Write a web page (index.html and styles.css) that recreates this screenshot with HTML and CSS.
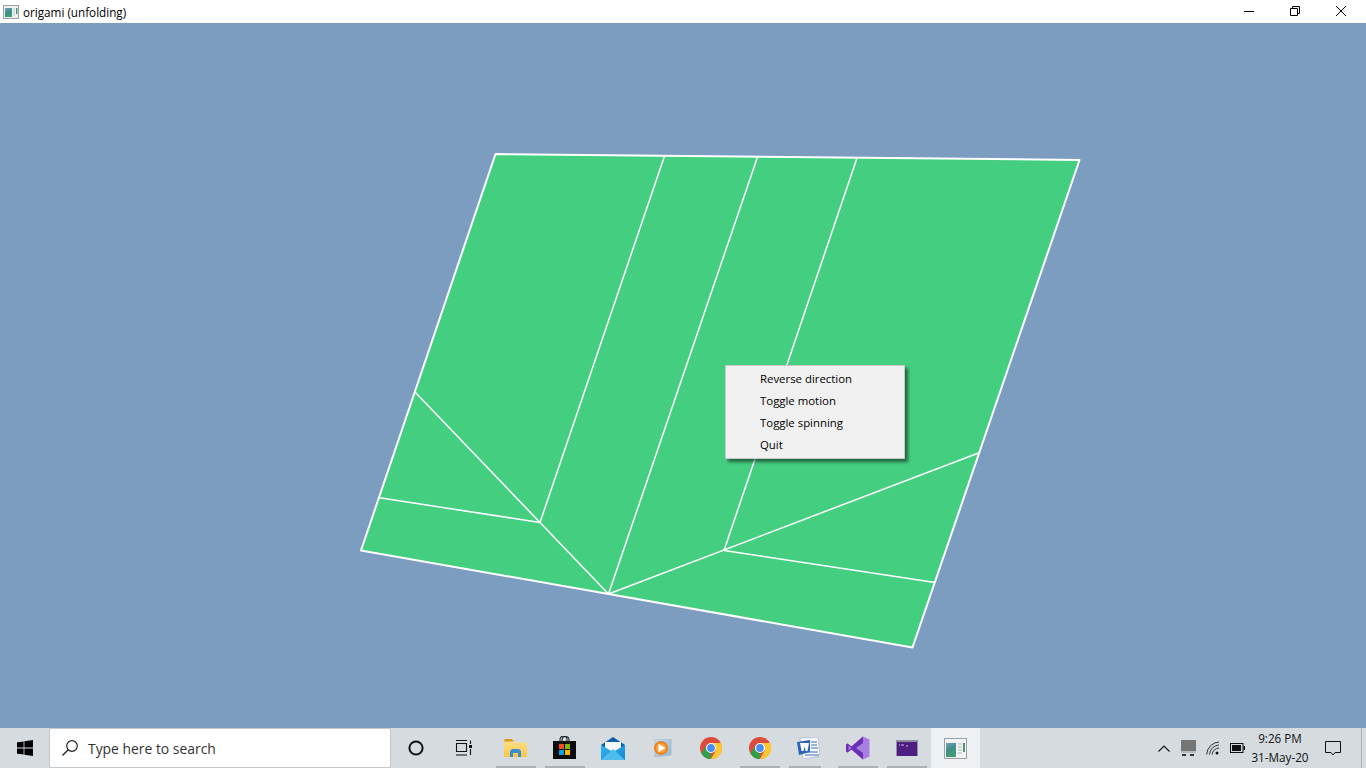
FILE: index.html
```html
<!DOCTYPE html>
<html lang="en">
<head>
<meta charset="utf-8">
<title>origami (unfolding)</title>
<link rel="stylesheet" href="styles.css">
</head>
<body>
<div class="screen">
  <svg class="defs" width="0" height="0" aria-hidden="true">
    <defs>
      <linearGradient id="panel" x1="0" y1="0" x2="0.4" y2="1"><stop offset="0" stop-color="#6f9fc4"/><stop offset="0.55" stop-color="#3f8f86"/><stop offset="1" stop-color="#3fa070"/></linearGradient>
      <linearGradient id="folder" x1="0" y1="0" x2="0" y2="1"><stop offset="0" stop-color="#fde08a"/><stop offset="1" stop-color="#f7c548"/></linearGradient>
      <linearGradient id="mail" x1="0" y1="0" x2="1" y2="1"><stop offset="0" stop-color="#38b4ec"/><stop offset="1" stop-color="#1186d4"/></linearGradient>
      <linearGradient id="glass" x1="0" y1="0" x2="1" y2="1"><stop offset="0" stop-color="#c8deef"/><stop offset="1" stop-color="#8fb6d2"/></linearGradient>
    </defs>
  </svg>
  <header class="titlebar">
    <svg class="app-icon" width="16" height="16" viewBox="0 0 16 16"><rect x="0.5" y="1.500" width="15" height="13" fill="#eef1f0" stroke="#9aa3a3"/><rect x="2" y="4" width="7" height="9" fill="url(#panel)"/><path d="M10 5H12M10 7H12M10 9H12M10 11H12" stroke="#c3cccc"/><rect x="13" y="4" width="1.500" height="6" fill="#4a9478"/></svg>
    <span class="title">origami (unfolding)</span>
    <div class="win-controls">
      <div class="win-btn"><svg width="12" height="12" viewBox="0 0 12 12"><path d="M1 6.500H11" stroke="#000" fill="none"/></svg></div>
      <div class="win-btn"><svg width="12" height="12" viewBox="0 0 12 12"><path d="M1.500 3.500H8.500V10.500H1.500ZM3.500 3.500V1.500H10.500V8.500H8.500" stroke="#000" fill="none"/></svg></div>
      <div class="win-btn"><svg width="12" height="12" viewBox="0 0 12 12"><path d="M1 1L11 11M11 1L1 11" stroke="#000" stroke-width="1" fill="none"/></svg></div>
    </div>
  </header>

  <main class="canvas">
    <svg class="scene" viewBox="0 23 1366 705" width="1366" height="705">
      <polygon class="sheet" points="495.500,154 1079.500,160 912.500,647.500 361,550.500"/>
      <g class="folds">
        <line x1="664.500" y1="156" x2="540" y2="522.500"/>
        <line x1="757.500" y1="157" x2="608.500" y2="594"/>
        <line x1="857" y1="158" x2="724" y2="550.500"/>
        <line x1="415" y1="392" x2="608.500" y2="594"/>
        <line x1="378" y1="497.500" x2="540" y2="522.500"/>
        <line x1="608.500" y1="594" x2="978.500" y2="453"/>
        <line x1="724" y1="550.500" x2="935" y2="582.500"/>
      </g>
    </svg>
    <ul class="menu">
      <li>Reverse direction</li>
      <li>Toggle motion</li>
      <li>Toggle spinning</li>
      <li>Quit</li>
    </ul>
  </main>

  <footer class="taskbar">
    <div class="start"><svg width="16" height="16" viewBox="0 0 16 16"><path d="M0 2.300L6.600 1.400V7.500H0ZM7.400 1.300L16 0V7.500H7.400ZM0 8.500H6.600V14.600L0 13.700ZM7.400 8.500H16V16L7.400 14.700Z" fill="#000"/></svg></div>
    <div class="search">
      <svg width="18" height="18" viewBox="0 0 18 18"><circle cx="11" cy="7" r="5.300" fill="none" stroke="#222" stroke-width="1.200"/><path d="M7.200 10.800L1.500 16.500" stroke="#222" stroke-width="1.300"/></svg>
      <span>Type here to search</span>
    </div>
    <div class="tb-sys">
      <div class="tb sys"><svg width="16" height="16" viewBox="0 0 16 16"><circle cx="8" cy="8" r="6.600" fill="none" stroke="#111" stroke-width="2"/></svg></div>
      <div class="tb sys"><svg width="18" height="16" viewBox="0 0 18 16"><path d="M1 .5H12M1.500 3.500H11.500V11.500H1.500ZM1 15H12M15.500 .5V4M15.500 9V15" fill="none" stroke="#111" stroke-width="1.100"/><rect x="14" y="5" width="3" height="3" fill="#111"/></svg></div>
    </div>
    <div class="tb-apps">
      <div class="tb on"><svg width="23" height="18" viewBox="0 0 23 18"><path d="M0 1.500H9L11 3.500H23V18H0Z" fill="url(#folder)"/><path d="M0 2A2 2 0 0 1 2 0H8L10 2.500H0Z" fill="#d99a25"/><path d="M6 18V12L8 10H15L17 12V18H14V14H9V18Z" fill="#3a8ed0"/></svg></div>
      <div class="tb on"><svg width="23" height="24" viewBox="0 0 23 24"><rect y="5" width="23" height="18" fill="#0c0c0c"/><path d="M7 9V3.500A3.500 3.500 0 0 1 14 3.500V9M9 9V4A3.500 3.500 0 0 1 16 4V9" fill="none" stroke="#222" stroke-width="1.100"/><rect x="6" y="8" width="5" height="5" fill="#f25022"/><rect x="12" y="8" width="5" height="5" fill="#7fba00"/><rect x="6" y="14" width="5" height="5" fill="#00a4ef"/><rect x="12" y="14" width="5" height="5" fill="#ffb900"/></svg></div>
      <div class="tb"><svg width="24" height="23" viewBox="0 0 24 23"><path d="M0 8L12 0L24 8V20H0Z" fill="#0f5fa8"/><path d="M4 5H20V13L12 17L4 13Z" fill="#f3f8fc"/><path d="M0 8L12 15L24 8V23H0Z" fill="url(#mail)"/><path d="M0 23L12 12L24 23Z" fill="#4fbcee"/></svg></div>
      <div class="tb"><svg width="20" height="18" viewBox="0 0 20 18"><path d="M3 0H19V16L3 18Z" fill="url(#glass)" stroke="#9db7cc" stroke-width=".6"/><circle cx="9" cy="9" r="7" fill="#f07d18"/><circle cx="9" cy="9" r="5.200" fill="#f9a13c"/><path d="M6.500 4.800L13.500 9L6.500 13.200Z" fill="#fff"/></svg></div>
      <div class="tb"><svg width="22" height="22" viewBox="0 0 22 22"><circle cx="11" cy="11" r="11" fill="#dd4b3d"/><path d="M11 22A11 11 0 0 1 1.470 16.500L6.200 8.500L11 16Z" fill="#2f9e48"/><path d="M11 6H21A11 11 0 0 1 11 22L16 13Z" fill="#fbc92f"/><circle cx="11" cy="11" r="5" fill="#fff"/><circle cx="11" cy="11" r="3.900" fill="#4a8bf0"/></svg></div>
      <div class="tb on"><svg width="22" height="22" viewBox="0 0 22 22"><circle cx="11" cy="11" r="11" fill="#dd4b3d"/><path d="M11 22A11 11 0 0 1 1.470 16.500L6.200 8.500L11 16Z" fill="#2f9e48"/><path d="M11 6H21A11 11 0 0 1 11 22L16 13Z" fill="#fbc92f"/><circle cx="11" cy="11" r="5" fill="#fff"/><circle cx="11" cy="11" r="3.900" fill="#4a8bf0"/></svg></div>
      <div class="tb on narrow"><svg width="23" height="22" viewBox="0 0 23 22"><path d="M3 1L21 0L23 19L6 22Z" fill="#f6f8fb" stroke="#a7b4c8" stroke-width=".7"/><path d="M0 5L13 3V15L2 18Z" fill="#2a63b8"/><path d="M14 5H20M14 8H20M14 11H21M8 15H21M8 18H22" stroke="#3a6db8"/><path d="M3 6H12L10.500 14H8.500L7.500 9.500L6.500 14H4.500Z" fill="#fff"/></svg></div>
      <div class="tb on"><svg width="24" height="24" viewBox="0 0 24 24"><path d="M17 .5L23.500 3.500V20.500L17 23.500L5.500 13.500L1.500 16.500L0 15.500V8.500L1.500 7.500L5.500 10.500Z" fill="#a77fe0"/><path d="M17 .5V7L10 12L17 17V23.500L5.500 13.500L1.500 16.500L0 15.500V8.500L1.500 7.500L5.500 10.500Z" fill="#6a2fb5"/><path d="M2.500 9.500V14.500L5.500 12Z" fill="#a77fe0"/></svg></div>
      <div class="tb on"><svg width="22" height="16" viewBox="0 0 22 16"><rect width="22" height="16" fill="#8f8f9f"/><rect x="1" y="2" width="20" height="14" fill="#4e1f82"/><path d="M3 5H4M5 5H8M10 6H12" stroke="#c8bde0"/></svg></div>
      <div class="tb active"><svg width="23" height="21" viewBox="0 0 23 21"><rect x=".5" y=".5" width="22" height="20" fill="#f2f4f3" stroke="#9aa3a3"/><rect x="2" y="5" width="10" height="14" fill="url(#panel)"/><path d="M14 6H18M14 9H18M14 12H18M14 15H18" stroke="#c3cccc" stroke-width="1.400"/><rect x="19" y="5" width="2" height="9" fill="#4a9478"/></svg></div>
    </div>
    <div class="tray">
      <svg class="t-chev" width="12" height="7" viewBox="0 0 12 7"><path d="M.5 6.500L6 1L11.500 6.500" fill="none" stroke="#111" stroke-width="1.100"/></svg>
      <svg class="t-net" width="15" height="16" viewBox="0 0 15 16"><rect width="15" height="11" fill="#767676"/><rect y="11" width="15" height="2" fill="#bbb"/><rect x="1" y="14" width="4" height="2" fill="#333"/><rect x="9" y="14" width="4" height="2" fill="#333"/></svg>
      <svg class="t-wifi" width="14" height="14" viewBox="0 0 14 14"><path d="M.7 13.500A13 13 0 0 1 13 1M3.500 13.500A10 10 0 0 1 13 4M6 13.500A7.500 7.500 0 0 1 13 7" fill="none" stroke="#333"/><circle cx="11" cy="12" r="1.500" fill="#111"/></svg>
      <svg class="t-batt" width="15" height="10" viewBox="0 0 15 10"><rect x=".5" y=".5" width="12.500" height="9" fill="none" stroke="#111"/><rect x="2" y="2" width="9" height="6" fill="#111"/><rect x="13.500" y="3" width="1.500" height="4" fill="#111"/></svg>
      <div class="clock"><span>9:26 PM</span><span>31-May-20</span></div>
      <svg class="t-note" width="16" height="15" viewBox="0 0 16 15"><path d="M.5 .5H15.500V11.500H10L8 14L6 11.500H.5Z" fill="none" stroke="#111"/></svg>
    </div>
    <div class="show-desktop"></div>
  </footer>
</div>
</body>
</html>
```

FILE: styles.css
```css
* { box-sizing: border-box; }
html, body { margin: 0; height: 100%; overflow: hidden; }
body { font-family: "Open Sans", "Noto Sans", sans-serif; }
.screen { width: 1366px; height: 768px; display: flex; flex-direction: column; }
.defs { position: absolute; }

.titlebar { height: 23px; background: #fff; display: flex; align-items: center; padding-left: 3px; flex: none; }
.app-icon { flex: none; }
.title { margin-left: 4px; font-size: 11.7px; color: #000; white-space: nowrap; }
.win-controls { margin-left: auto; display: flex; padding-right: 2px; }
.win-btn { width: 46px; height: 23px; display: flex; align-items: center; justify-content: center; position: relative; top: -1px; }

.canvas { position: relative; flex: 1; background: #7c9cc0; min-height: 0; }
.scene { display: block; }
.sheet { fill: #44ce80; stroke: #fff; stroke-width: 2; stroke-linejoin: round; }
.folds line { stroke: #fff; stroke-width: 1.500; }

.menu { position: absolute; left: 725px; top: 342px; width: 180px; height: 94px; margin: 0; padding: 2px 0 0 34px; list-style: none; background: #f0f0f0; border: 1px solid #c8c8c8; box-shadow: 3px 3px 3px rgba(0,0,0,.5); font-size: 11.400px; color: #000; }
.menu li { height: 22px; line-height: 22px; white-space: nowrap; }

.taskbar { height: 40px; flex: none; background: #d5dbdf; display: flex; align-items: stretch; }
.start { width: 49px; display: flex; align-items: center; justify-content: center; }
.search { width: 342px; background: #fff; border: 1px solid #c4c9cd; display: flex; align-items: center; padding-left: 11px; gap: 9px; font-size: 13.900px; color: #333; }
.tb-sys { display: flex; padding-left: 1px; }
.tb-apps { display: flex; padding-left: 3px; }
.tb { width: 48.900px; display: flex; align-items: center; justify-content: center; position: relative; }
.tb.sys { width: 48px; }
.tb.on::after { content: ""; position: absolute; left: 5px; right: 4px; bottom: 0; height: 2px; background: #aab0b5; }
.tb.narrow::after { right: 12px; }
.tb.active { background: #eef1f3; }
.tray { margin-left: auto; display: flex; align-items: center; }
.t-chev { margin-right: 11px; }
.t-net { margin-right: 10px; }
.t-wifi { margin-right: 10px; }
.t-batt { margin-right: 3px; }
.clock { width: 64px; display: flex; flex-direction: column; align-items: center; font-size: 11.700px; line-height: 19px; color: #111; }
.t-note { margin: 0 20px 0 13px; }
.show-desktop { width: 5px; border-left: 1px solid #aab0b5; }
```
